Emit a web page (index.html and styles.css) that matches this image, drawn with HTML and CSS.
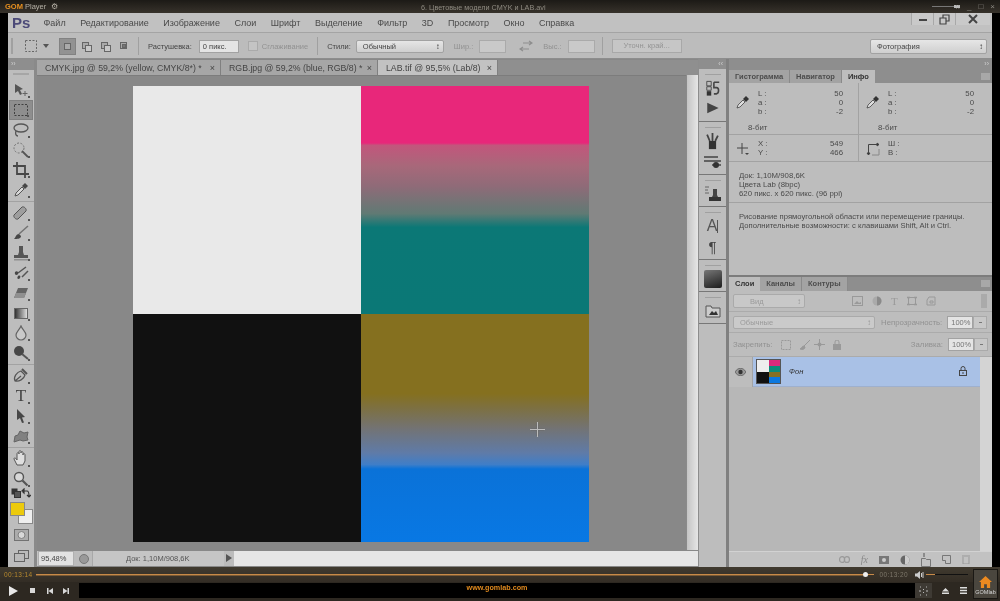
FILE: index.html
```html
<!DOCTYPE html>
<html lang="ru">
<head>
    <meta charset="UTF-8">
    <meta name="viewport" content="width=device-width, initial-scale=1.0">
    <title>6. Цветовые модели CMYK и LAB.avi</title>
    <link rel="stylesheet" href="styles.css">
</head>
<body>
    <header class="gom-title">
        <div class="gom-logo"><b>GOM</b> Player <span class="gom-gear">&#9881;</span></div>
        <div class="gom-file">6. Цветовые модели CMYK и LAB.avi</div>
        <div class="gom-win">
            <span class="gom-slider"></span>
            <span class="gom-dots">::</span>
            <span>_</span><span>&#9633;</span><span>&times;</span>
        </div>
    </header>

    <div class="video">
        <div class="ps">
            <nav class="menubar">
                <span class="ps-logo">Ps</span>
                <span>Файл</span><span>Редактирование</span><span>Изображение</span><span>Слои</span><span>Шрифт</span><span>Выделение</span><span>Фильтр</span><span>3D</span><span>Просмотр</span><span>Окно</span><span>Справка</span>
                <div class="win-btns">
                    <span class="win-btn">
                        <svg width="10" height="10" viewBox="0 0 10 10"><path d="M1 6h8" stroke="#444" stroke-width="2"/></svg>
                    </span>
                    <span class="win-btn">
                        <svg width="11" height="11" viewBox="0 0 11 11" fill="none" stroke="#444" stroke-width="1.2"><path d="M1 4h6v6H1zM4 4V1h6v6H7"/></svg>
                    </span>
                    <span class="win-btn win-close">
                        <svg width="10" height="10" viewBox="0 0 10 10"><path d="M1 1l8 8M9 1l-8 8" stroke="#444" stroke-width="2"/></svg>
                    </span>
                </div>
            </nav>

            <div class="options">
                <span class="grip"></span>
                <svg class="opt-tool" width="14" height="14" viewBox="0 0 14 14" fill="none" stroke="#666" stroke-dasharray="2 1.5"><rect x="1.5" y="1.5" width="11" height="11"/></svg>
                <svg class="opt-arrow" width="6" height="4" viewBox="0 0 6 4"><path d="M0 0h6L3 4z" fill="#555"/></svg>
                <span class="mode-group">
                    <span class="mode on"><i class="sq"></i></span>
                    <span class="mode"><i class="sq"></i><i class="sq sq2"></i></span>
                    <span class="mode"><i class="sq"></i><i class="sq sq2"></i></span>
                    <span class="mode"><i class="sq"></i><i class="sq sq3"></i></span>
                </span>
                <span class="sep"></span>
                <label class="opt-label">Растушевка:</label>
                <span class="field feather">0 пикс.</span>
                <span class="check"></span>
                <span class="opt-label dim">Сглаживание</span>
                <span class="sep"></span>
                <label class="opt-label">Стили:</label>
                <span class="select styles">Обычный<em>&#8597;</em></span>
                <span class="opt-label dim shir">Шир.:</span>
                <span class="field blank"></span>
                <svg class="swap" width="14" height="12" viewBox="0 0 14 12"><path d="M4 3h9M10 1l3 2-3 2M10 9H1M4 7L1 9l3 2" fill="none" stroke="#8e8e8e" stroke-width="1.2"/></svg>
                <span class="opt-label dim vys">Выс.:</span>
                <span class="field blank"></span>
                <span class="sep sep-last"></span>
                <span class="refine">Уточн. край...</span>
                <span class="select workspace">Фотография<em>&#8597;</em></span>
            </div>

            <div class="workarea">
                <aside class="tools">
                    <span class="strip">&rsaquo;&rsaquo;</span>
                    <span class="tools-top"></span>
                    <span class="tool"><svg width="18" height="16" viewBox="0 0 18 16"><path d="M3 2l8 5-3 1 2 4-2 1-2-4-3 2z" fill="#444"/><path d="M13 9v5M10.5 11.5h5" stroke="#555"/></svg></span>
                    <span class="tool active"><svg width="16" height="14" viewBox="0 0 16 14" fill="none" stroke="#333" stroke-dasharray="2 1.5"><rect x="1.5" y="1.5" width="13" height="11"/></svg></span>
                    <span class="tool"><svg width="18" height="16" viewBox="0 0 18 16" fill="none" stroke="#444" stroke-width="1.3"><ellipse cx="9" cy="6" rx="7" ry="4"/><path d="M4 9c-1 3 0 5 2 5"/></svg></span>
                    <span class="tool"><svg width="18" height="16" viewBox="0 0 18 16" fill="none" stroke="#666"><circle cx="7" cy="6" r="5" stroke-dasharray="2 1.5"/><path d="M10 9l6 6" stroke="#444" stroke-width="1.8"/></svg></span>
                    <span class="tool"><svg width="16" height="16" viewBox="0 0 16 16" fill="none" stroke="#333" stroke-width="1.8"><path d="M4 0v12h12M0 4h12v12"/></svg></span>
                    <span class="tool"><svg width="16" height="16" viewBox="0 0 16 16"><path d="M2 14l1-3 6-6 2 2-6 6z" fill="#ddd" stroke="#444"/><path d="M9 4l3-3 3 3-3 3z" fill="#333"/></svg></span>
                    <span class="tool-sep"></span>
                    <span class="tool"><svg width="18" height="16" viewBox="0 0 18 16"><path d="M2 10l8-8c2-1 5 2 4 4l-8 8c-2 1-5-2-4-4z" fill="#999" stroke="#444"/></svg></span>
                    <span class="tool"><svg width="18" height="16" viewBox="0 0 18 16"><path d="M16 1L7 9" stroke="#666" stroke-width="1.5"/><path d="M7 9c-3 0-3 3-5 5 3 0 7 0 7-3z" fill="#333"/></svg></span>
                    <span class="tool"><svg width="16" height="16" viewBox="0 0 16 16" fill="#444"><path d="M6 1h4v6l1 3H5l1-3z"/><rect x="1" y="10" width="14" height="3"/><rect x="1" y="14" width="14" height="1.5" fill="#888"/></svg></span>
                    <span class="tool"><svg width="18" height="16" viewBox="0 0 18 16"><path d="M14 2L6 8M16 6l-6 6" stroke="#444" stroke-width="1.5"/><path d="M3 7c2-2 4 0 3 2s-4 1-3-2zM6 11c2-1 3 0 2 2s-4 1-2-2z" fill="#333"/></svg></span>
                    <span class="tool"><svg width="18" height="14" viewBox="0 0 18 14"><path d="M6 2h10l-4 10H2z" fill="#555"/><path d="M2 12l2-5h10l-2 5z" fill="#888"/></svg></span>
                    <span class="tool"><span class="gradient-ico"></span></span>
                    <span class="tool"><svg width="14" height="16" viewBox="0 0 14 16"><path d="M7 1c1 3 5 6 5 9a5 5 0 0 1-10 0c0-3 4-6 5-9z" fill="#ccc" stroke="#555" stroke-width="1.2"/></svg></span>
                    <span class="tool"><svg width="16" height="16" viewBox="0 0 16 16"><circle cx="6" cy="6" r="5" fill="#333"/><path d="M9 9l6 5" stroke="#444" stroke-width="2"/></svg></span>
                    <span class="tool-sep"></span>
                    <span class="tool"><svg width="18" height="18" viewBox="0 0 18 18" fill="none" stroke="#444" stroke-width="1.2"><path d="M3 14C1 10 5 5 9 4l4 4c-1 4-6 7-10 6zM9 9L3 14"/><path d="M10 2l5 5" stroke-width="2"/></svg></span>
                    <span class="tool tool-t">T</span>
                    <span class="tool"><svg width="12" height="16" viewBox="0 0 12 16"><path d="M2 1l8 8-3 .5 2 5-2 .5-2-5-3 2z" fill="#333"/></svg></span>
                    <span class="tool"><svg width="18" height="16" viewBox="0 0 18 16"><path d="M2 14l1-6 3-1 2-4 4 2 4-1-1 5 1 3-5 1-3-1z" fill="#777" stroke="#555"/></svg></span>
                    <span class="tool-sep"></span>
                    <span class="tool"><svg width="16" height="18" viewBox="0 0 16 18"><path d="M4 15L1 9c0-2 2-1 3 1V4c0-2 2-2 2 0V2c0-2 2-2 2 0v1c0-2 2-2 2 0v2c0-2 2-2 2 0v6l-2 4z" fill="#e4e4e4" stroke="#444"/></svg></span>
                    <span class="tool"><svg width="16" height="16" viewBox="0 0 16 16" fill="none" stroke="#444"><circle cx="6" cy="6" r="4.5" stroke-width="1.4" fill="#ddd"/><path d="M9.5 9.5l5 5" stroke-width="2.2"/></svg></span>
                    <div class="swatch-minis">
                        <svg width="10" height="10" viewBox="0 0 10 10"><rect x="0.5" y="0.5" width="6" height="6" fill="#333"/><rect x="3.5" y="3.5" width="6" height="6" fill="#555" stroke="#333"/></svg>
                        <svg width="10" height="10" viewBox="0 0 10 10" fill="none" stroke="#333" stroke-width="1.2"><path d="M2 3h4c2 0 2 2 2 5M1 3l2-2v4zM6 7l2 2 2-2"/></svg>
                    </div>
                    <div class="swatches">
                        <span class="swatch-bg"></span>
                        <span class="swatch-fg"></span>
                    </div>
                    <span class="tool tool-low"><svg width="15" height="12" viewBox="0 0 15 12"><rect x="0.5" y="0.5" width="14" height="11" fill="#aaa" stroke="#666"/><circle cx="7.5" cy="6" r="3.5" fill="#ddd" stroke="#777"/></svg></span>
                    <span class="tool tool-low"><svg width="15" height="13" viewBox="0 0 15 13" fill="#bbb" stroke="#555"><rect x="4.5" y="0.5" width="10" height="8"/><rect x="0.5" y="3.5" width="10" height="8"/></svg></span>
                </aside>

                <main class="doc">
                    <div class="tabs">
                        <span class="tab">CMYK.jpg @ 59,2% (yellow, CMYK/8*) * <i>&times;</i></span>
                        <span class="tab">RGB.jpg @ 59,2% (blue, RGB/8) * <i>&times;</i></span>
                        <span class="tab current">LAB.tif @ 95,5% (Lab/8) <i>&times;</i></span>
                    </div>
                    <div class="canvas-row">
                        <div class="canvas">
                            <div class="lab-image">
                                <div class="q-white"></div>
                                <div class="q-pink"></div>
                                <div class="q-black"></div>
                                <div class="q-olive"></div>
                            </div>
                            <svg class="cursor" width="15" height="15" viewBox="0 0 15 15"><path d="M6.5 1v13M8.5 1v13M1 6.5h13M1 8.5h13" stroke="#6a6a6a" stroke-width=".7" opacity=".8"/><path d="M7.5 0v15M0 7.5h15" stroke="#bcbcbc"/></svg>
                        </div>
                        <div class="vscroll"></div>
                    </div>
                    <div class="status">
                        <span class="zoom-val">95,48%</span>
                        <span class="status-ico"></span>
                        <span class="status-doc">Док: 1,10M/908,6K</span>
                        <span class="status-arrow"></span>
                        <span class="hscroll"></span>
                    </div>
                </main>

                <aside class="dock">
                    <span class="strip strip-right">&lsaquo;&lsaquo;</span>
                    <div class="dock-group g-tall">
                        <span class="dock-icon"><svg width="16" height="17" viewBox="0 0 18 18"><path d="M2 1h5v5H2zM2 7h5v4H2z" fill="none" stroke="#444"/><rect x="2" y="12" width="5" height="5" fill="#333"/><path d="M10 2h6M10 2v6h3c3 0 3 6 0 7h-3" fill="none" stroke="#444" stroke-width="1.8"/></svg></span>
                        <span class="dock-icon"><svg width="15" height="14" viewBox="0 0 16 16"><path d="M2 2l13 6-13 6z" fill="#444"/></svg></span>
                    </div>
                    <div class="dock-group g-tall">
                        <span class="dock-icon"><svg width="15" height="18" viewBox="0 0 16 20"><rect x="4" y="10" width="8" height="9" fill="#333"/><path d="M5 10L2 3M8 10V1M11 10l3-6" stroke="#444" stroke-width="2"/></svg></span>
                        <span class="dock-icon"><svg width="18" height="14" viewBox="0 0 18 14"><path d="M0 3h14M0 7h17M8 11h9" stroke="#444" stroke-width="1.3"/><circle cx="12" cy="11" r="3" fill="#333"/></svg></span>
                    </div>
                    <div class="dock-group g-short">
                        <span class="dock-icon"><svg width="18" height="16" viewBox="0 0 18 16"><path d="M1 1h4M1 4h3M1 7h4" stroke="#666"/><path d="M9 3h4v6l1 2H8l1-2z" fill="#444"/><rect x="5" y="11" width="12" height="4" fill="#333"/></svg></span>
                    </div>
                    <div class="dock-group g-tall">
                        <span class="dock-icon dock-a">A<i></i></span>
                        <span class="dock-icon dock-p">&para;</span>
                    </div>
                    <div class="dock-group g-short">
                        <span class="dock-icon"><span class="dock-grad"></span></span>
                    </div>
                    <div class="dock-group g-short">
                        <span class="dock-icon"><svg width="16" height="14" viewBox="0 0 16 14"><path d="M1 2h5l1 2h8v9H1z" fill="#ccc" stroke="#555"/><path d="M4 11l3-4 2 2 2-2 2 4z" fill="#333"/></svg></span>
                    </div>
                </aside>

                <aside class="panels">
                    <span class="strip strip-right">&rsaquo;&rsaquo;</span>
                    <section class="info-panel">
                        <div class="panel-tabs">
                            <span>Гистограмма</span><span>Навигатор</span><span class="current">Инфо</span>
                            <em class="panel-menu"></em>
                        </div>
                        <div class="info-row info-color">
                            <div class="info-cell">
                                <svg width="14" height="14" viewBox="0 0 14 14"><path d="M1 13l1-3 5-5 2 2-5 5z" fill="#ddd" stroke="#444" stroke-width=".8"/><path d="M7 4l3-3 3 3-3 3z" fill="#333"/></svg>
                                <dl><dt>L :</dt><dd>50</dd><dt>a :</dt><dd>0</dd><dt>b :</dt><dd>-2</dd></dl>
                                <span class="bits">8-бит</span>
                            </div>
                            <div class="info-cell">
                                <svg width="14" height="14" viewBox="0 0 14 14"><path d="M1 13l1-3 5-5 2 2-5 5z" fill="#ddd" stroke="#444" stroke-width=".8"/><path d="M7 4l3-3 3 3-3 3z" fill="#333"/></svg>
                                <dl><dt>L :</dt><dd>50</dd><dt>a :</dt><dd>0</dd><dt>b :</dt><dd>-2</dd></dl>
                                <span class="bits">8-бит</span>
                            </div>
                        </div>
                        <div class="info-row info-pos">
                            <div class="info-cell">
                                <svg width="14" height="14" viewBox="0 0 14 14"><path d="M6 1v11M1 6h11" stroke="#444"/><path d="M9 11h4l-2 2z" fill="#444"/></svg>
                                <dl><dt>X :</dt><dd>549</dd><dt>Y :</dt><dd>466</dd></dl>
                            </div>
                            <div class="info-cell">
                                <svg width="14" height="14" viewBox="0 0 14 14" fill="none" stroke="#444"><path d="M2.5 13V2.5H13"/><path d="M13 7v6H6" stroke="#888"/><path d="M11 1l2 1.5-2 1.5zM1 11l1.5 2L4 11z" fill="#333"/></svg>
                                <dl><dt>Ш :</dt><dd></dd><dt>В :</dt><dd></dd></dl>
                            </div>
                        </div>
                        <div class="info-doc">Док: 1,10M/908,6K<br>Цвета Lab (8bpc)<br>620 пикс. x 620 пикс. (96 ppi)</div>
                        <div class="info-hint">Рисование прямоугольной области или перемещение границы.<br>Дополнительные возможности: с клавишами Shift, Alt и Ctrl.</div>
                    </section>

                    <section class="layers-panel">
                        <div class="panel-tabs">
                            <span class="current">Слои</span><span>Каналы</span><span>Контуры</span>
                            <em class="panel-menu"></em>
                        </div>
                        <div class="layers-filter">
                            <span class="select kind">Вид<em>&#8597;</em></span>
                            <div class="filter-icons">
                                <svg width="11" height="10" viewBox="0 0 11 10"><rect x="0.5" y="0.5" width="10" height="9" fill="none" stroke="#999"/><path d="M2 8l3-3 2 2 2-1v2z" fill="#999"/></svg>
                                <svg width="10" height="10" viewBox="0 0 10 10"><circle cx="5" cy="5" r="4.5" fill="#aaa"/><path d="M5 .5a4.5 4.5 0 0 1 0 9z" fill="#8a8a8a"/></svg>
                                <span class="filter-t">T</span>
                                <svg width="10" height="10" viewBox="0 0 10 10" fill="none" stroke="#999"><rect x="1.5" y="1.5" width="7" height="7"/><path d="M0 1.5h3M7 1.5h3M0 8.5h3M7 8.5h3" stroke-width="1.5"/></svg>
                                <svg width="10" height="10" viewBox="0 0 10 10" fill="none" stroke="#999"><path d="M3 1h6v8H1V4zM4 5h3v2H4z"/></svg>
                            </div>
                            <span class="filter-toggle"></span>
                        </div>
                        <div class="layers-blend">
                            <span class="select blend">Обычные<em>&#8597;</em></span>
                            <span class="opt-label dim">Непрозрачность:</span>
                            <span class="field pct">100%</span><span class="pct-arrow"></span>
                        </div>
                        <div class="layers-lock">
                            <span class="opt-label dim">Закрепить:</span>
                            <svg width="10" height="10" viewBox="0 0 10 10"><rect x="0.5" y="0.5" width="9" height="9" fill="none" stroke="#999" stroke-dasharray="2 1"/></svg>
                            <svg width="12" height="10" viewBox="0 0 12 10"><path d="M11 0L5 6M5 6c-2 0-2 2-4 3 3 1 5 0 5-2z" fill="#999" stroke="#999"/></svg>
                            <svg width="11" height="11" viewBox="0 0 11 11"><path d="M5.5 0v11M0 5.5h11" stroke="#999"/><circle cx="5.5" cy="5.5" r="2" fill="#999"/></svg>
                            <svg width="8" height="10" viewBox="0 0 8 10"><rect y="4" width="8" height="6" fill="#999"/><path d="M2 4V2a2 2 0 0 1 4 0v2" fill="none" stroke="#999"/></svg>
                            <span class="opt-label dim fill-label">Заливка:</span>
                            <span class="field pct">100%</span><span class="pct-arrow"></span>
                        </div>
                        <div class="layers-list">
                            <div class="layer-eye">
                                <svg width="11" height="8" viewBox="0 0 11 8"><path d="M0 4c3-5 8-5 11 0-3 5-8 5-11 0z" fill="#999" stroke="#444" stroke-width=".6"/><circle cx="5.5" cy="4" r="2.2" fill="#333"/></svg>
                            </div>
                            <div class="layer">
                                <div class="layer-thumb">
                                    <i class="t-white"></i><i class="t-pink"></i><i class="t-black"></i><i class="t-olive"></i>
                                </div>
                                <span class="layer-name">Фон</span>
                                <svg class="layer-lock" width="8" height="10" viewBox="0 0 8 10" fill="none" stroke="#444"><rect x="0.5" y="4.5" width="7" height="5"/><path d="M2 4V2.5a2 2 0 0 1 4 0V4M3 7h2"/></svg>
                            </div>
                            <span class="layers-scroll"></span>
                        </div>
                        <div class="layers-foot">
                            <svg width="11" height="7" viewBox="0 0 11 7" fill="none" stroke="#999" stroke-width="1.2"><rect x="0.6" y="0.6" width="5" height="5.8" rx="2.5"/><rect x="5.4" y="0.6" width="5" height="5.8" rx="2.5"/></svg>
                            <span class="foot-fx">fx</span>
                            <svg width="10" height="8" viewBox="0 0 10 8"><rect width="10" height="8" fill="#777"/><circle cx="5" cy="4" r="2" fill="#ccc"/></svg>
                            <svg width="10" height="10" viewBox="0 0 10 10"><circle cx="5" cy="5" r="4.5" fill="#666"/><path d="M5 .5a4.5 4.5 0 0 1 0 9z" fill="#ccc"/></svg>
                            <svg width="10" height="14" viewBox="0 0 10 14" fill="none" stroke="#777"><path d="M.5 13.5v-8h4l1 1h4v7z"/><path d="M3 0v4" stroke="#555"/></svg>
                            <svg width="9" height="9" viewBox="0 0 9 9" fill="none" stroke="#777"><path d="M.5.5h8v8h-5v-3h-3z"/></svg>
                            <svg width="8" height="9" viewBox="0 0 8 9"><path d="M0 1h8M1 2v7h6V2" fill="none" stroke="#999"/></svg>
                        </div>
                    </section>
                </aside>
            </div>
        </div>
    </div>

    <footer class="player">
        <div class="seek-row">
            <span class="time-now">00:13:14</span>
            <div class="seek"><span class="seek-fill"></span><span class="seek-knob"></span><span class="seek-rest"></span></div>
            <span class="time-all">00:13:20</span>
            <svg class="vol-ico" width="9" height="8" viewBox="0 0 9 8"><path d="M0 2.5h2L5 0v8L2 5.5H0z" fill="#ccc"/><path d="M6.500 2v4M8 1v6" stroke="#ccc"/></svg>
            <div class="volume"><span></span></div>
        </div>
        <div class="ctrl-row">
            <div class="transport">
                <svg width="9" height="10" viewBox="0 0 9 10"><path d="M0 0l9 5-9 5z" fill="#e8e8e8"/></svg>
                <svg width="5" height="5" viewBox="0 0 5 5"><rect width="5" height="5" fill="#d8d8d8"/></svg>
                <svg width="6" height="6" viewBox="0 0 6 6"><path d="M0 0h1.5v6H0zM6 0v6L1.5 3z" fill="#d8d8d8"/></svg>
                <svg class="next" width="6" height="6" viewBox="0 0 6 6"><path d="M6 0H4.5v6H6zM0 0v6l4.5-3z" fill="#d8d8d8"/></svg>
            </div>
            <div class="ad-bar">www.gomlab.com</div>
            <div class="extra">
                <span class="extra-fit"><svg width="11" height="10" viewBox="0 0 11 10"><path d="M2 1h1M2 9h1M8 1h1M8 9h1M5.5 3v1M5.5 6v1M1 5h2M8 5h2" stroke="#bbb"/></svg></span>
                <svg width="7" height="6" viewBox="0 0 7 6"><path d="M3.5 0L7 3.5H0zM0 4.5h7V6H0z" fill="#ddd"/></svg>
                <svg width="7" height="7" viewBox="0 0 7 7"><path d="M0 0h7v1.5H0zM0 2.7h7v1.5H0zM0 5.500h7V7H0z" fill="#ddd"/></svg>
            </div>
        </div>
        <div class="gomlab">
            <svg width="13" height="12" viewBox="0 0 14 13"><path d="M7 0l7 6.5h-2V13H8.5V9h-3v4H2V6.5H0z" fill="#ec8a20"/></svg>
            <span>GOMlab</span>
        </div>
    </footer>
</body>
</html>
```

FILE: styles.css
```css
* {
    box-sizing: border-box;
}

body {
    margin: 0;
    width: 1000px;
    height: 601px;
    overflow: hidden;
    background-color: #000;
    font-family: "Liberation Sans", Arial, sans-serif;
    color: #444;
    display: flex;
    flex-direction: column;
    filter: blur(0.5px);
}

/* GOM title bar */
.gom-title {
    height: 13px;
    background: linear-gradient(#1c1a16, #37322b);
    display: flex;
    align-items: center;
    position: relative;
    padding: 0 5px;
    color: #b5b0a5;
    font-size: 7.5px;
    flex-shrink: 0;
}
.gom-logo b {
    color: #e8901f;
    font-weight: bold;
}
.gom-gear {
    margin-left: 3px;
}
.gom-file {
    position: absolute;
    left: 421px;
    top: 3px;
    color: #8e8a80;
    font-size: 7.25px;
}
.gom-win {
    margin-left: auto;
    display: flex;
    align-items: center;
    gap: 7px;
    color: #8c8a84;
    font-size: 8px;
    line-height: 8px;
}
.gom-slider {
    width: 24px;
    height: 1px;
    background: #777;
    margin-right: -7px;
}
.gom-slider::after {
    content: "";
    display: block;
    width: 6px;
    height: 3px;
    margin: -1px 0 0 22px;
    background: #bbb;
}

/* Photoshop window */
.video {
    height: 554px;
    padding: 0 8px;
    background: #000;
    flex-shrink: 0;
}
.ps {
    height: 100%;
    background: #bdbdbd;
    display: flex;
    flex-direction: column;
}

.menubar {
    height: 20px;
    display: flex;
    align-items: center;
    gap: 14.5px;
    padding-left: 4px;
    font-size: 9px;
    color: #4a4a4a;
    background: #c1c1c1;
    border-bottom: 1px solid #a4a4a4;
    position: relative;
    flex-shrink: 0;
}
.ps-logo {
    font-size: 15px;
    font-weight: bold;
    color: #4c4a78;
    width: 17px;
}
.win-btns {
    position: absolute;
    right: 2px;
    top: 0;
    height: 12px;
    display: flex;
    background: #c9c9c9;
}
.win-btn {
    width: 22px;
    height: 12px;
    display: flex;
    align-items: center;
    justify-content: center;
    border-left: 1px solid #a8a8a8;
}
.win-close {
    width: 35px;
}

.options {
    height: 26px;
    display: flex;
    align-items: center;
    padding: 1px 0 0 3px;
    background: #bcbcbc;
    border-bottom: 1px solid #8d8d8d;
    flex-shrink: 0;
    font-size: 7px;
}
.grip {
    width: 2px;
    height: 16px;
    background: #a0a0a0;
    margin-right: 11px;
}
.opt-arrow {
    margin-left: 5px;
}
.mode-group {
    display: flex;
    margin: 0 -4px 0 10px;
    gap: 2px;
}
.mode {
    width: 17px;
    height: 17px;
    position: relative;
    display: block;
}
.mode.on {
    background: #929292;
    border: 1px solid #828282;
}
.sq {
    position: absolute;
    left: 4px;
    top: 4px;
    width: 7px;
    height: 7px;
    border: 1px solid #666;
    background: #aaa;
}
.sq2 {
    left: 7px;
    top: 7px;
    background: #c8c8c8;
}
.sq3 {
    left: 6px;
    top: 6px;
    width: 4px;
    height: 4px;
    background: #777;
}
.sep {
    width: 1px;
    height: 18px;
    background: #a0a0a0;
    margin: 0 9px;
}
.sep-last {
    margin-left: 7px;
}
.opt-label {
    font-size: 7.5px;
    color: #444;
    white-space: nowrap;
}
.dim {
    color: #919191;
}
.field {
    height: 13px;
    background: #e4e4e4;
    border: 1px solid #a2a2a2;
    font-size: 7.5px;
    color: #444;
    line-height: 11px;
    padding-left: 3px;
}
.feather {
    width: 40px;
    margin: 0 9px 0 7px;
}
.check {
    width: 10px;
    height: 10px;
    background: #c4c4c4;
    border: 1px solid #aaa;
    margin-right: 4px;
}
.select {
    display: flex;
    align-items: center;
    justify-content: space-between;
    height: 13px;
    padding: 0 3px 0 6px;
    background: linear-gradient(#e6e6e6, #cfcfcf);
    border: 1px solid #a2a2a2;
    border-radius: 2px;
    font-size: 7.5px;
    color: #444;
}
.select em {
    font-style: normal;
    font-size: 8px;
}
.styles {
    width: 88px;
    margin-left: 5px;
}
.shir {
    margin: 0 6px 0 10px;
}
.blank {
    width: 27px;
    background: #c9c9c9;
    border-color: #aaa;
}
.swap {
    margin: 0 10px 0 13px;
}
.vys {
    margin-right: 6px;
}
.refine {
    width: 70px;
    height: 14px;
    border: 1px solid #a8a8a8;
    background: #c6c6c6;
    color: #949494;
    font-size: 7.5px;
    line-height: 12px;
    text-align: center;
}
.workspace {
    width: 117px;
    height: 15px;
    margin-left: auto;
    margin-right: 5px;
}

.workarea {
    flex: 1;
    display: flex;
    min-height: 0;
}

/* collapse strip on top of docks */
.strip {
    height: 11px;
    width: 100%;
    flex-shrink: 0;
    background: #8e8e8e;
    color: #d0d0d0;
    font-size: 7px;
    line-height: 10px;
    padding-left: 3px;
}
.strip-right {
    text-align: right;
    padding: 0 3px 0 0;
}

/* left toolbar */
.tools {
    width: 29px;
    flex-shrink: 0;
    background: #bdbdbd;
    border-right: 3px solid #8a8a8a;
    display: flex;
    flex-direction: column;
    align-items: center;
}
.tools-top {
    width: 16px;
    height: 2px;
    background: #a6a6a6;
    margin: 3px 0 5px;
    flex-shrink: 0;
}
.tool {
    width: 24px;
    height: 20px;
    flex-shrink: 0;
    display: flex;
    align-items: center;
    justify-content: center;
    position: relative;
}
.tool svg {
    opacity: 0.85;
}
.tool::after {
    content: "";
    position: absolute;
    right: 3px;
    bottom: 2px;
    width: 2px;
    height: 2px;
    background: #555;
}
.tool.active {
    background: #8e8e8e;
    border: 1px solid #808080;
}
.tool-low {
    margin-top: 1px;
}
.tool-low::after {
    display: none;
}
.tool-sep {
    width: 100%;
    height: 1px;
    background: #a2a2a2;
    flex-shrink: 0;
    margin: 1px 0;
}
.tool-t {
    font: 17px "Liberation Serif", serif;
    color: #444;
}
.gradient-ico {
    width: 14px;
    height: 11px;
    background: linear-gradient(90deg, #333, #ddd);
    border: 1px solid #666;
}
.swatch-minis {
    width: 26px;
    display: flex;
    justify-content: space-between;
    padding: 0 3px;
    height: 11px;
    flex-shrink: 0;
    margin-top: -1px;
}
.swatches {
    width: 24px;
    height: 22px;
    position: relative;
    flex-shrink: 0;
    margin-top: 3px;
}
.swatch-fg {
    position: absolute;
    left: 1px;
    top: 0;
    width: 15px;
    height: 14px;
    background: #ecca0c;
    border: 1px solid #888;
}
.swatch-bg {
    position: absolute;
    left: 9px;
    top: 7px;
    width: 15px;
    height: 15px;
    background: #eee;
    border: 1px solid #888;
}

/* document */
.doc {
    width: 661px;
    flex-shrink: 0;
    display: flex;
    flex-direction: column;
    background: #888;
    padding-top: 1px;
}
.tabs {
    height: 15px;
    display: flex;
    background: #8f8f8f;
    font-size: 8.75px;
    color: #444;
    flex-shrink: 0;
}
.tab {
    display: flex;
    align-items: center;
    padding-left: 8px;
    background: #a6a6a6;
    border-right: 1px solid #808080;
    white-space: nowrap;
    width: 184px;
}
.tab:nth-child(2) {
    width: 157px;
}
.tab i {
    margin-left: auto;
    margin-right: 5px;
    font-style: normal;
    font-size: 9px;
}
.tab.current {
    background: #c2c2c2;
    width: 120px;
}
.canvas-row {
    flex: 1;
    display: flex;
    min-height: 0;
}
.canvas {
    flex: 1;
    background: #888;
    padding: 10px 0 0 96px;
    position: relative;
    border-top: 1px solid #7c7c7c;
}
.lab-image {
    width: 456px;
    height: 456px;
    display: grid;
    grid-template-columns: 228px 228px;
    grid-template-rows: 228px 228px;
}
.q-white {
    background: #e9e9e9;
}
.q-black {
    background: #111;
}
.q-pink {
    background: linear-gradient(#e8277a 0, #e8277a 25%, #c2567c 26%, #a8687a 35%, #8f6b78 44%, #607a74 56%, #0b7876 62%, #0a7876 100%);
}
.q-olive {
    background: linear-gradient(#85701f 0, #85701f 35%, #7d7040 41%, #737373 50%, #5f7ba8 61%, #3f7ec8 66%, #0a72d8 68%, #0878e4 100%);
}
.cursor {
    position: absolute;
    left: 493px;
    top: 346px;
}
.vscroll {
    width: 12px;
    background: linear-gradient(90deg, #c4c4c4, #e6e6e6);
    border-left: 1px solid #8a8a8a;
}
.status {
    height: 15px;
    display: flex;
    align-items: center;
    background: #c5c5c5;
    font-size: 7.5px;
    color: #555;
    flex-shrink: 0;
    margin: 1px 0 1px;
}
.zoom-val {
    width: 36px;
    height: 100%;
    background: #e2e2e2;
    border: 1px solid #b0b0b0;
    line-height: 13px;
    padding-left: 2px;
    margin-left: 1px;
    color: #444;
}
.status-ico {
    width: 19px;
    height: 100%;
    position: relative;
    background: #bcbcbc;
    border-right: 1px solid #a8a8a8;
}
.status-ico::after {
    content: "";
    position: absolute;
    left: 5px;
    top: 3px;
    width: 8px;
    height: 8px;
    border-radius: 50%;
    background: #999;
    border: 1px solid #777;
}
.status-doc {
    width: 131px;
    padding-left: 33px;
}
.status-arrow {
    width: 10px;
    height: 100%;
    position: relative;
    background: #bcbcbc;
    flex-shrink: 0;
}
.status-arrow::after {
    content: "";
    position: absolute;
    left: 2px;
    top: 3px;
    border-left: 6px solid #555;
    border-top: 4px solid transparent;
    border-bottom: 4px solid transparent;
}
.hscroll {
    flex: 1;
    height: 100%;
    background: #e6e6e6;
}

/* icon dock */
.dock {
    width: 31px;
    flex-shrink: 0;
    background: #bdbdbd;
    border-left: 1px solid #8d8d8d;
    border-right: 3px solid #808080;
    display: flex;
    flex-direction: column;
}
.dock .strip {
    height: 10px;
}
.dock-group {
    display: flex;
    flex-direction: column;
    align-items: center;
    padding-top: 5px;
    border-bottom: 1px solid #777;
    flex-shrink: 0;
}
.dock-group::before {
    content: "";
    width: 16px;
    height: 1px;
    background: #a0a0a0;
    margin-bottom: 3px;
}
.g-tall {
    height: 53px;
}
.g-short {
    height: 32px;
}
.dock-icon {
    width: 100%;
    height: 20px;
    flex-shrink: 0;
    display: flex;
    align-items: center;
    justify-content: center;
}
.dock-a {
    font-size: 16px;
    color: #555;
}
.dock-a i {
    display: inline-block;
    width: 1px;
    height: 13px;
    background: #555;
}
.dock-p {
    font-size: 15px;
    color: #444;
}
.dock-grad {
    width: 18px;
    height: 18px;
    background: linear-gradient(160deg, #777, #1c1c1c);
    border-radius: 2px;
}

/* right panels */
.panels {
    flex: 1;
    display: flex;
    flex-direction: column;
    background: #7c7c7c;
    min-width: 0;
}
.panel-tabs {
    height: 13px;
    flex-shrink: 0;
    display: flex;
    font-size: 7.5px;
    font-weight: bold;
    color: #4c4c4c;
    background: #8e8e8e;
    position: relative;
}
.panel-tabs span {
    padding: 0 6px;
    line-height: 13px;
    background: #a3a3a3;
    border-right: 1px solid #8a8a8a;
}
.panel-tabs span.current {
    background: #bdbdbd;
    color: #333;
    border-right: 0;
}
.panel-menu {
    position: absolute;
    right: 2px;
    top: 3px;
    width: 9px;
    height: 7px;
    background: #a8a8a8;
}
.info-panel {
    height: 205px;
    flex-shrink: 0;
    background: #bdbdbd;
    display: flex;
    flex-direction: column;
    font-size: 7.8px;
    color: #4a4a4a;
}
.info-row {
    display: flex;
    border-bottom: 1px solid #a2a2a2;
}
.info-color {
    height: 52px;
}
.info-pos {
    height: 27px;
}
.info-cell {
    width: 130px;
    position: relative;
    padding: 6px 15px 0 29px;
    border-right: 1px solid #a2a2a2;
    display: flex;
    flex-direction: column;
}
.info-cell + .info-cell {
    border-right: 0;
    flex: 1;
    padding-right: 18px;
}
.info-cell svg {
    position: absolute;
    left: 7px;
    top: 12px;
}
.info-pos svg {
    top: 7px;
}
.info-cell dl {
    margin: 0;
    display: grid;
    grid-template-columns: 1fr auto;
    line-height: 9px;
}
.info-pos .info-cell {
    padding-top: 4px;
}
.info-cell dd {
    margin: 0;
    text-align: right;
}
.bits {
    position: absolute;
    left: 19px;
    top: 40px;
}
.info-doc {
    padding: 9px 8px 0 10px;
    line-height: 9px;
    border-bottom: 1px solid #a2a2a2;
    height: 41px;
}
.info-hint {
    padding: 9px 0 0 10px;
    line-height: 9px;
    font-size: 7.65px;
}
.layers-panel {
    flex: 1;
    margin-top: 2px;
    background: #bdbdbd;
    display: flex;
    flex-direction: column;
    min-height: 0;
}
.layers-panel .panel-tabs {
    height: 14px;
}
.layers-panel .panel-tabs span {
    line-height: 14px;
}
.layers-filter {
    height: 21px;
    display: flex;
    align-items: center;
    padding: 0 4px;
    border-bottom: 1px solid #ababab;
    flex-shrink: 0;
}
.kind {
    width: 72px;
    height: 14px;
    color: #9a9a9a;
    padding-left: 16px;
    background: #c8c8c8;
    border-color: #aaa;
}
.filter-icons {
    display: flex;
    align-items: center;
    gap: 9px;
    margin-left: 47px;
}
.filter-t {
    font: 11px "Liberation Serif", serif;
    color: #999;
}
.filter-toggle {
    width: 6px;
    height: 14px;
    background: #aaa;
    margin-left: auto;
    margin-right: 1px;
}
.layers-blend, .layers-lock {
    height: 21px;
    display: flex;
    align-items: center;
    padding: 0 4px;
    flex-shrink: 0;
    gap: 4px;
    border-bottom: 1px solid #ababab;
}
.layers-lock {
    height: 24px;
}
.layers-blend .opt-label, .layers-lock .opt-label {
    font-size: 7.8px;
}
.layers-lock svg {
    margin-left: 4px;
}
.layers-lock svg:nth-of-type(3) {
    margin-left: -1px;
}
.blend {
    width: 142px;
    color: #9a9a9a;
    background: #cacaca;
    border-color: #aaa;
    margin-right: 2px;
}
.pct {
    width: 26px;
    margin-left: 1px;
    color: #777;
}
.pct-arrow {
    width: 14px;
    height: 13px;
    margin-left: -4px;
    position: relative;
    background: #c8c8c8;
    border: 1px solid #aaa;
}
.pct-arrow::after {
    content: "";
    position: absolute;
    left: 5px;
    top: 5px;
    width: 3px;
    height: 1px;
    background: #777;
}
.fill-label {
    margin-left: auto;
}
.layers-list {
    flex: 1;
    display: flex;
    align-items: flex-start;
    background: #b7b7b7;
    min-height: 0;
    position: relative;
}
.layer-eye {
    width: 24px;
    height: 30px;
    display: flex;
    align-items: center;
    justify-content: center;
    border-right: 1px solid #a4a4a4;
    background: #bdbdbd;
}
.layer {
    width: 227px;
    height: 30px;
    background: #a9c1e6;
    display: flex;
    align-items: center;
    padding-left: 3px;
    position: relative;
    border-bottom: 1px solid #9eb0ce;
}
.layer-thumb {
    width: 25px;
    height: 25px;
    border: 1px solid #555;
    display: grid;
    grid-template-columns: 1fr 1fr;
    grid-template-rows: 1fr 1fr;
}
.t-white {
    background: #eee;
}
.t-pink {
    background: linear-gradient(#d9297c 50%, #0c8a7a 50%);
}
.t-black {
    background: #111;
}
.t-olive {
    background: linear-gradient(#857024 50%, #0a78e0 50%);
}
.layer-name {
    font-size: 7.5px;
    font-style: italic;
    margin-left: 8px;
    color: #333;
}
.layer-lock {
    position: absolute;
    right: 13px;
    top: 9px;
}
.layers-scroll {
    flex: 1;
    align-self: stretch;
    background: #d4d4d4;
}
.layers-foot {
    height: 16px;
    flex-shrink: 0;
    display: flex;
    align-items: center;
    justify-content: flex-end;
    gap: 11px;
    padding-right: 22px;
    background: #c2c2c2;
    border-top: 1px solid #d2d2d2;
}
.foot-fx {
    font: italic 10px "Liberation Serif", serif;
    color: #888;
}

/* GOM controls */
.player {
    height: 34px;
    background: #2d2821;
    position: relative;
    flex-shrink: 0;
}
.seek-row {
    height: 15px;
    display: flex;
    align-items: center;
    gap: 4px;
    padding: 0 32px 0 4px;
    background: linear-gradient(#403a2f, #332d25);
    font-size: 6.5px;
    letter-spacing: .4px;
}
.time-now {
    color: #b88a2e;
    width: 28px;
    flex-shrink: 0;
}
.time-all {
    color: #7d776a;
    margin-left: 1px;
    margin-right: 3px;
}
.seek {
    flex: 1;
    display: flex;
    align-items: center;
}
.seek-fill {
    flex: 1;
    height: 1px;
    background: #c88a48;
    box-shadow: 0 1px 0 #7a5a34;
}
.seek-knob {
    width: 5px;
    height: 5px;
    border-radius: 50%;
    background: #eee;
}
.seek-rest {
    width: 6px;
    height: 1px;
    background: #c88a48;
}
.volume {
    width: 42px;
    height: 1px;
    background: #111;
    margin-left: -2px;
}
.volume span {
    display: block;
    width: 9px;
    height: 1px;
    background: #c88a48;
}
.ctrl-row {
    height: 19px;
    display: flex;
    align-items: center;
    padding: 1px 0 3px 9px;
}
.transport {
    width: 70px;
    display: flex;
    align-items: center;
    gap: 12px;
    flex-shrink: 0;
}
.transport .next {
    margin-left: -2px;
}
.ad-bar {
    width: 836px;
    height: 15px;
    background: #000;
    color: #e08a1e;
    font-size: 7.2px;
    font-weight: bold;
    text-align: center;
    line-height: 9px;
    flex-shrink: 0;
}
.extra {
    display: flex;
    align-items: center;
    gap: 11px;
}
.extra-fit {
    width: 17px;
    height: 15px;
    background: #3e3a34;
    display: flex;
    align-items: center;
    justify-content: center;
    margin-right: -1px;
}
.gomlab {
    position: absolute;
    right: 2px;
    top: 2px;
    width: 25px;
    height: 30px;
    background: #4a463e;
    border: 1px solid #1a1814;
    display: flex;
    flex-direction: column;
    align-items: center;
    padding-top: 6px;
    font-size: 5.5px;
    color: #d8d8d8;
    gap: 1px;
}
```
